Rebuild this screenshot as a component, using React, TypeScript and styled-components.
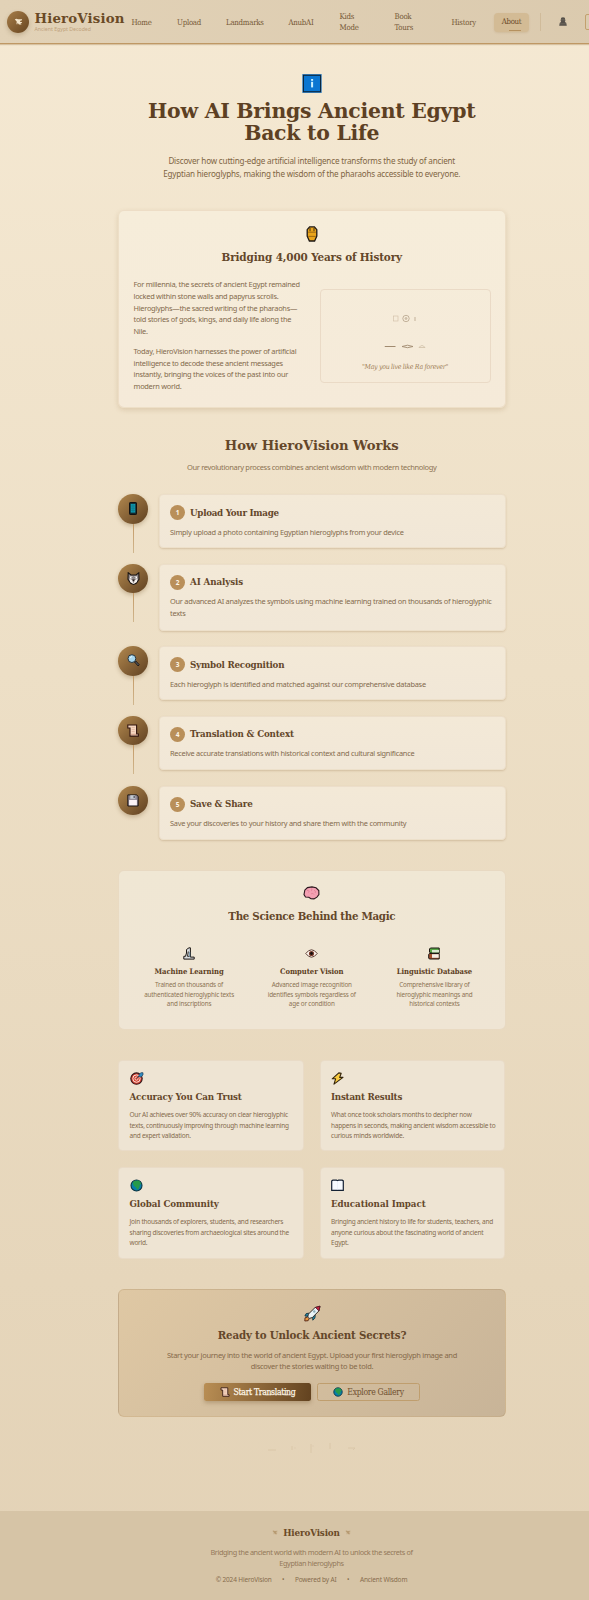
import React from "react";
import styled, { createGlobalStyle } from "styled-components";

const serif = `"DejaVu Serif Condensed", "DejaVu Serif", serif`;
const serifWide = `"DejaVu Serif", serif`;
const sans = `"Noto Sans", "Open Sans", sans-serif`;

const Global = createGlobalStyle`
  * { box-sizing: border-box; }
  html, body { margin: 0; padding: 0; overflow: hidden; }
  body { font-family: ${sans}; color: #8b7355; }
  h1, h2, h3, h4, p { margin: 0; white-space: nowrap; }
  svg { display: block; flex: none; }
`;

const Page = styled.div`
  width: 589px;
  height: 1600px;
  overflow: hidden;
  display: flex;
  flex-direction: column;
  background: linear-gradient(180deg, #f5e9d3 0%, #eddfc6 42%, #e6d6bb 80%, #e3d2b6 100%);
`;

/* ---------- header ---------- */
const Header = styled.header`
  position: relative;
  flex: none;
  height: 44px;
  width: 700px;
  display: flex;
  align-items: center;
  padding: 0 0 0 7px;
  border-bottom: 1px solid #bf9864;
  background: linear-gradient(100deg, #e2d2b7, #dac9ad);
  box-shadow: 0 1px 1px rgba(160, 120, 70, 0.35);
`;
const LogoMark = styled.div`
  width: 22px;
  height: 22px;
  flex: none;
  border-radius: 50%;
  display: grid;
  place-items: center;
  background: linear-gradient(135deg, #a87e49, #66441f);
  box-shadow: 0 2px 4px rgba(100, 70, 30, 0.25);
`;
const Brand = styled.div`
  width: 102.5px;
  flex: none;
  padding: 1px 0 0 5.5px;
`;
const BrandName = styled.div`
  font: bold 13.3px/15px ${serifWide};
  letter-spacing: 0.17px;
  color: #6a4a26;
  white-space: nowrap;
`;
const BrandTag = styled.div`
  font-size: 5.2px;
  line-height: 7px;
  color: #bfa17b;
  white-space: nowrap;
`;
const NavItem = styled.a<{ $w: number }>`
  width: ${(p) => p.$w}px;
  flex: none;
  padding-top: 1px;
  font: 7.8px/11px ${serif};
  letter-spacing: -0.25px;
  color: #765937;
  white-space: pre-line;
`;
const ActiveItem = styled.a`
  position: relative;
  flex: none;
  width: 35px;
  height: 19px;
  margin-right: 11px;
  margin-top: 1px;
  border-radius: 4px;
  background: #d3bb95;
  box-shadow: 0 1px 2px rgba(140, 100, 50, 0.15);
  font: 7.8px/18px ${serif};
  letter-spacing: -0.3px;
  text-align: center;
  color: #6b4b2a;
  &::after {
    content: "";
    position: absolute;
    left: 15px;
    bottom: 1px;
    width: 12px;
    height: 1px;
    background: #b5915f;
  }
`;
const Divider = styled.div`
  width: 1px;
  height: 18px;
  margin-right: 17.5px;
  background: #d0bb9a;
`;
const LoginBox = styled.div`
  width: 60px;
  height: 16px;
  margin-left: 18px;
  border: 1px solid #c3a06e;
  border-radius: 2px;
`;

/* ---------- page body ---------- */
const Main = styled.main`
  width: 387.5px;
  margin-left: 118px;
  display: flex;
  flex-direction: column;
  flex: none;
`;
const Hero = styled.section`
  height: 166px;
  padding-top: 30px;
  display: flex;
  flex-direction: column;
  align-items: center;
`;
const HeroTitle = styled.h1`
  margin-top: 7px;
  font: bold 20.4px/22px ${serifWide};
  letter-spacing: -0.24px;
  text-align: center;
  color: #5d4023;
`;
const HeroText = styled.p`
  font-size: 8.1px;
  line-height: 13px;
  letter-spacing: -0.18px;
  text-align: center;
  color: #7f6543;
  &:first-of-type { margin-top: 9.5px; }
`;
const Heading = styled.h2<{ $size?: number; $ls?: number; $top?: number }>`
  margin-top: ${(p) => p.$top ?? 0}px;
  font: bold ${(p) => p.$size ?? 11.6}px/18px ${serif};
  letter-spacing: ${(p) => p.$ls ?? -0.13}px;
  text-align: center;
  color: #64472a;
`;
const WorksHeading = styled(Heading)`
  font: bold 13.2px/18px ${serifWide};
  letter-spacing: -0.06px;
`;
const Panel = styled.section`
  display: flex;
  flex-direction: column;
  align-items: center;
  border-radius: 6px;
  border: 1px solid rgba(205, 170, 125, 0.2);
`;
const StoryPanel = styled(Panel)`
  height: 198px;
  background: linear-gradient(180deg, #f6edda, #f5ead9);
  box-shadow: 0 2px 5px rgba(140, 100, 50, 0.2);
  padding-top: 15px;
`;
const StoryColumns = styled.div`
  width: 100%;
  display: flex;
  padding: 13.5px 14px 0 14.5px;
`;
const StoryText = styled.div`
  width: 186px;
`;
const StoryLine = styled.p<{ $gap?: boolean }>`
  font-size: 7.4px;
  line-height: 11.75px;
  letter-spacing: -0.27px;
  color: #836a4c;
  margin-top: ${(p) => (p.$gap ? 8 : 0)}px;
`;
const Tablet = styled.div`
  width: 171px;
  height: 94px;
  margin-top: 9.5px;
  border: 1px solid #eadac6;
  border-radius: 4px;
  display: flex;
  flex-direction: column;
  align-items: center;
`;
const TabletGlyphs = styled.svg`
  margin-top: 24px;
  transform: translateX(0.5px);
`;
const Quote = styled.div`
  margin-top: 12px;
  font: italic 6.9px/10px ${serif};
  letter-spacing: -0.27px;
  color: #a07f58;
  white-space: nowrap;
`;

const Works = styled.section`
  height: 86px;
  padding-top: 29px;
`;
const WorksNote = styled.p`
  margin-top: 4.5px;
  font-size: 7.5px;
  line-height: 14px;
  letter-spacing: -0.33px;
  text-align: center;
  color: #8d7352;
`;
const Steps = styled.section`
  display: flex;
  flex-direction: column;
  gap: 15.5px;
`;
const StepRow = styled.div<{ $h: number }>`
  height: ${(p) => p.$h}px;
  display: flex;
  gap: 10.5px;
`;
const Rail = styled.div`
  width: 30px;
  display: flex;
  flex-direction: column;
  align-items: center;
`;
const StepBadge = styled.div`
  width: 30px;
  height: 29.5px;
  flex: none;
  border-radius: 50%;
  display: grid;
  place-items: center;
  background: linear-gradient(135deg, #b3894f, #5f4021);
  box-shadow: 0 2px 4px rgba(110, 75, 30, 0.3);
`;
const Connector = styled.div`
  width: 1px;
  height: 29px;
  flex: none;
  background: linear-gradient(#c49a66, #d0b78f);
`;
const StepCard = styled.div`
  flex: 1;
  padding: 10px 0 0 10.5px;
  border-radius: 4.5px;
  background: linear-gradient(180deg, #f3e9d7, #f1e7d7);
  border: 1px solid rgba(205, 170, 125, 0.14);
  box-shadow: 0 1px 2px rgba(140, 100, 50, 0.25);
`;
const StepHead = styled.div`
  display: flex;
  align-items: center;
  gap: 5px;
  height: 15px;
`;
const StepNumber = styled.span`
  width: 15px;
  height: 15px;
  border-radius: 50%;
  background: #b98f59;
  color: #fdf5e6;
  font: bold 6.5px/15px ${sans};
  text-align: center;
`;
const StepTitle = styled.h3<{ $ls: number }>`
  font: bold 9.7px/14px ${serif};
  letter-spacing: ${(p) => p.$ls}px;
  color: #64472a;
  transform: translateY(-0.5px);
`;
const StepText = styled.p`
  margin-top: 6.5px;
  font-size: 7.4px;
  line-height: 11.5px;
  letter-spacing: -0.265px;
  color: #846b4d;
  & + & { margin-top: 0; }
`;

const SciencePanel = styled(Panel)`
  margin-top: 30.5px;
  height: 159.5px;
  padding-top: 15px;
  background: linear-gradient(180deg, #f0e7d4, #efe5d4);
`;
const ScienceGrid = styled.div`
  width: 368px;
  margin-top: 21.5px;
  display: grid;
  grid-template-columns: repeat(3, 1fr);
`;
const ScienceItem = styled.div`
  display: flex;
  flex-direction: column;
  align-items: center;
`;
const ScienceTitle = styled.h4`
  margin-top: 6px;
  font: bold 7.6px/12px ${serif};
  letter-spacing: -0.05px;
  color: #5d4023;
`;
const ScienceText = styled.p`
  margin-top: 2.5px;
  font-size: 6.3px;
  line-height: 9.3px;
  letter-spacing: -0.17px;
  text-align: center;
  white-space: pre-line;
  color: #8c7353;
`;

const BenefitGrid = styled.section`
  margin-top: 30px;
  display: grid;
  grid-template-columns: 185.5px 185.5px;
  gap: 15.5px 16px;
`;
const Benefit = styled.div`
  height: 91.7px;
  padding: 11px 0 0 10.5px;
  border-radius: 4.5px;
  border: 1px solid rgba(205, 170, 125, 0.14);
  background: #eee4d3;
`;
const BenefitTitle = styled.h3<{ $ls: number }>`
  margin-top: 4px;
  font: bold 9.7px/16px ${serif};
  letter-spacing: ${(p) => p.$ls}px;
  color: #64472a;
`;
const BenefitText = styled.p`
  margin-top: 5.5px;
  font-size: 6.5px;
  line-height: 10.4px;
  letter-spacing: -0.23px;
  white-space: pre-line;
  color: #846b4d;
`;

const CallPanel = styled(Panel)`
  margin-top: 30px;
  width: 388px;
  height: 128px;
  padding-top: 15px;
  border: 1px solid rgba(170, 130, 80, 0.22);
  background: linear-gradient(135deg, #dfc8a4, #c8b498);
`;
const CallText = styled.p`
  font-size: 7.5px;
  line-height: 11px;
  letter-spacing: -0.29px;
  text-align: center;
  white-space: pre-line;
  color: #85694a;
  margin-top: 6px;
`;
const Actions = styled.div`
  display: flex;
  gap: 6px;
  margin-top: 11px;
`;
const Button = styled.button<{ $primary?: boolean }>`
  width: ${(p) => (p.$primary ? 107 : 103)}px;
  height: 18px;
  padding: 0;
  display: flex;
  align-items: center;
  justify-content: center;
  gap: 4px;
  border-radius: 2.5px;
  border: 1px solid ${(p) => (p.$primary ? "transparent" : "#bf9e6e")};
  background: ${(p) => (p.$primary ? "linear-gradient(100deg, #b98e54, #62421f) border-box" : "transparent")};
  box-shadow: ${(p) => (p.$primary ? "0 2px 4px rgba(100, 70, 30, 0.3)" : "none")};
  font: 400 8.6px/16px ${serif};
  -webkit-text-stroke: ${(p) => (p.$primary ? "0.25px #fdf5e6" : "0")};
  letter-spacing: -0.32px;
  white-space: nowrap;
  color: ${(p) => (p.$primary ? "#fdf5e6" : "#6f5030")};
`;
const Ornaments = styled.div`
  height: 94px;
  padding-top: 24px;
  display: flex;
  justify-content: center;
  opacity: 0.2;
`;

/* ---------- footer ---------- */
const Footer = styled.footer`
  flex: 1;
  padding: 14px 34px 0 0;
  width: 657px;
  display: flex;
  flex-direction: column;
  align-items: center;
  background: #d6c4a6;
`;
const FooterBrand = styled.div`
  display: flex;
  align-items: center;
  gap: 5px;
  font: bold 8.8px/16px ${serifWide};
  letter-spacing: -0.15px;
  color: #6a4a26;
`;
const FooterText = styled.p`
  margin-top: 6px;
  font-size: 7.3px;
  line-height: 11px;
  letter-spacing: -0.39px;
  text-align: center;
  white-space: pre-line;
  color: #94795a;
`;
const FooterMeta = styled.div`
  display: flex;
  gap: 10.5px;
  margin-top: 5.5px;
  font-size: 6.5px;
  line-height: 12px;
  letter-spacing: -0.15px;
  color: #866c4d;
`;

/* ---------- icons ---------- */
type IconProps = { w: number; h: number; box: string; children: React.ReactNode };
const Icon = ({ w, h, box, children }: IconProps) => (
  <svg width={w} height={h} viewBox={box} fill="none">{children}</svg>
);
const ink = "#1d1714";

const InfoIcon = () => (
  <Icon w={20} h={19} box="0 0 20 19">
    <rect x="1" y="0.8" width="18" height="17.4" fill="#0a76d2" stroke="#2b77b8" strokeWidth="1.4" />
    <rect x="1.5" y="1.3" width="17" height="16.4" stroke="#092033" strokeWidth="0.9" />
    <rect x="9.1" y="5" width="2" height="1.8" fill="#c9f1ff" />
    <rect x="9.1" y="7.8" width="2" height="5.6" fill="#c9f1ff" />
  </Icon>
);
const UrnIcon = () => (
  <Icon w={12} h={16} box="0 0 12 16">
    <path d="M3.6 .9h4.8L10.8 3.7v6.5L8.6 15H3.4L1.2 10.2V3.7z" fill="#eaa51b" stroke={ink} strokeWidth="1.3" />
    <path d="M4 2v3.200M8 2v3.200" stroke={ink} strokeWidth="0.8" />
    <path d="M2.2 6.200h7.600M2.200 10.400h7.600" stroke="#8a5a10" strokeWidth="0.8" />
  </Icon>
);
const PhoneIcon = () => (
  <Icon w={8} h={13} box="0 0 8 13">
    <rect x="0.5" y="0.5" width="7" height="12" rx="0.7" fill="#16282c" stroke="#111" />
    <rect x="1.7" y="1.9" width="4.6" height="8.7" fill="#0d98ad" />
    <path d="M4 2v8.5M1.7 4h4.6M1.7 6.2h4.6M1.7 8.4h4.6" stroke="#136879" strokeWidth="0.5" />
  </Icon>
);
const WolfIcon = () => (
  <Icon w={13} h={13} box="0 0 13 13">
    <path d="M1.2.8 4 3h5l2.8-2.2.2 6.5-2.7 4L6.5 12.4 3.7 11.3 1 7.3z" fill="#8f8789" stroke={ink} strokeWidth="1.1" />
    <path d="M2.2 6.5 5 8l1.5 3.5L8 8l2.8-1.5-1 3.5-3.3 2L3.2 10z" fill="#f5f1ee" />
    <path d="M3 4.6h2.6v2H3zM7.4 4.6H10v2H7.4z" fill="#fff" />
    <path d="M4.6 5.2h1v1h-1zM7.4 5.2h1v1h-1z" fill={ink} />
    <path d="M5.2 7.5h2.6L6.5 9.6z" fill={ink} />
  </Icon>
);
const LensIcon = () => (
  <Icon w={13} h={13} box="0 0 13 13">
    <path d="m7.6 8 3.6 4 1-1.3L8.8 7z" fill="#58606a" stroke={ink} strokeWidth="1" />
    <circle cx="4.9" cy="4.6" r="3.9" fill="#a8d7ee" stroke="#26343e" />
    <path d="M3.2 3.8 5 2.4" stroke="#effbff" />
  </Icon>
);
const ScrollIcon = ({ w = 12, h = 13 }: { w?: number; h?: number }) => (
  <Icon w={w} h={h} box="0 0 12 13">
    <path d="M.8 1h8.8v9h1.8v2.1H3V4H.8z" fill="#f4d5bf" stroke="#32150f" strokeWidth="1.1" />
    <path d="M4.7 3.5h3M4.7 5.5h3M4.7 7.5h3" stroke="#d9a892" strokeWidth="0.6" />
    <path d="M3.5 10.3h6" stroke="#a8624f" strokeWidth="0.5" />
  </Icon>
);
const DiskIcon = () => (
  <Icon w={12} h={13} box="0 0 12 13">
    <path d="M.8.9h8.7l1.7 1.5V12H.8z" fill="#8d8592" stroke={ink} strokeWidth="1" />
    <path d="M3.3 1.2h5v3.6h-5z" fill="#c4cbd2" />
    <path d="M6.6 1.7h1.1v2.2H6.6z" fill="#414149" />
    <path d="M2.1 5.9h7.8v5.4H2.1z" fill="#fbf3f6" />
  </Icon>
);
const BrainIcon = () => (
  <Icon w={17} h={14} box="0 0 17 14">
    <path d="M1.800 4.200 4.500 1.600 9 .9l4 .9 2.800 2.800.1 4-2 2.500-2.900 1.800-3-.2-2.200-1.500-3.300-.2L1 8.600z" fill="#f3a0b2" stroke="#2b171d" strokeWidth="1.1" />
    <path d="M4 4.500c2-.5 2.500 1 1.500 2M8 2.500c1.500.5 1 2 0 2.500M11 4.500c1.500 0 2 1.500 1 2.500M8 8c1-1 2.500-.5 3 .5" stroke="#dc7790" strokeWidth="0.7" />
  </Icon>
);
const ArmIcon = () => (
  <Icon w={12} h={13} box="0 0 12 13">
    <path d="M3.5 2.500 6 .8h1.400v9.300h3.800v2H.8V9.300h1.700l1-3.300z" fill="#d8dbdc" stroke={ink} strokeWidth="1" />
    <path d="M5.300 4.500 4.500 9.300h2" stroke={ink} strokeWidth="0.9" />
    <path d="M6.800 5v5" stroke="#4b7ca1" strokeWidth="0.7" />
  </Icon>
);
const EyeIcon = () => (
  <Icon w={13} h={13} box="0 0 13 13">
    <path d="M.8 6.500Q3.500 2.800 6.500 2.800T12.200 6.500Q9.500 10.200 6.500 10.200T.8 6.500Z" fill="#fff6ee" stroke="#4a2a21" strokeWidth="0.9" />
    <circle cx="6.5" cy="6.5" r="2.6" fill="#7c3c2c" />
    <circle cx="6.5" cy="6.5" r="1.4" fill="#150f0e" />
  </Icon>
);
const BooksIcon = () => (
  <Icon w={12} h={13} box="0 0 12 13">
    <path d="M2.400 1h8.800v5H2.400L1.500 5V2z" fill="#58a847" stroke={ink} strokeWidth="1" />
    <path d="M4 3h7v2.400H4z" fill="#d9e8d0" />
    <path d="M1.400 6.500h9.800V12H1.400L.7 11V7.500z" fill="#a5502f" stroke={ink} strokeWidth="1" />
    <path d="M4 7.200h6.700v3.600H4z" fill="#f4eee6" />
  </Icon>
);
const TargetIcon = () => (
  <Icon w={14} h={13} box="0 0 14 13">
    <circle cx="6.5" cy="6.6" r="5.7" fill="#d6402f" stroke="#30161a" strokeWidth="1.1" />
    <circle cx="6.5" cy="6.6" r="3.7" stroke="#f9e3dc" strokeWidth="1" />
    <circle cx="6.5" cy="6.6" r="1.6" stroke="#f9e3dc" strokeWidth="0.9" />
    <path d="m6.800 6.300 3.400-3.400" stroke="#273442" strokeWidth="0.9" />
    <path d="M9 2.500 11 .7h2V3l-2 2-2.200-.3z" fill="#318bc0" stroke="#24415a" strokeWidth="0.7" />
  </Icon>
);
const BoltIcon = () => (
  <Icon w={13} h={13} box="0 0 13 13">
    <path d="M7.800.9 1.200 6.800h3.400L3 12.100l9-6.700H8.700l1.500-4.100z" fill="#f9cb3f" stroke="#33230b" strokeWidth="1.1" strokeLinejoin="round" />
  </Icon>
);
const GlobeIcon = ({ s = 13 }: { s?: number }) => (
  <Icon w={s} h={s} box="0 0 13 13">
    <circle cx="6.5" cy="6.5" r="5.5" fill="#087eaa" stroke="#0c3441" strokeWidth="1.1" />
    <path d="m4 2 5-.5 2.300 3-1.500 1.500-.5 2.500L7.500 11 6 8.500 3.800 6.800 2.600 4z" fill="#269a4a" />
  </Icon>
);
const BookIcon = () => (
  <Icon w={13} h={13} box="0 0 13 13">
    <path d="M.7 1.900 1.800 1.200h3.700l1 .5 1-.5h3.700l1.100.7v9.500H.7z" fill="#f7faff" stroke="#142134" strokeWidth="1.2" />
    <path d="M6.500 2.200v8.500" stroke="#e3e9f2" strokeWidth="0.5" />
  </Icon>
);
const RocketIcon = () => (
  <Icon w={17} h={17} box="0 0 17 17">
    <path d="M5 8.200 2.200 8.600.9 11l3 .3M8.700 12l.1 3.200 2-2 .5-3" fill="#218da9" stroke="#173240" strokeWidth="0.9" />
    <path d="m3.500 12.200-2.500.6L.8 16l3.300-.3 1-2" fill="#eb963d" stroke="#50261b" strokeWidth="0.9" />
    <path d="M16 1.200 11 2.600 4.300 9.200l-.5 3 1.300 1.200 3.200-.8 6.700-6.800z" fill="#eaf4f7" stroke={ink} strokeWidth="0.9" />
    <path d="m16 1.200-4.500 1.200 3.300 3.500z" fill="#ca2842" stroke="#571325" strokeWidth="0.8" />
    <circle cx="10.3" cy="6.5" r="1.2" fill="#8caeba" />
  </Icon>
);
const Bird = ({ color, w = 8 }: { color: string; w?: number }) => (
  <Icon w={w} h={w * 0.8} box="0 0 10 8">
    <path d="M.8 1.800 2.500.8 4.500 1.500 9 1.300 8.800 2.600 6.500 3.200 6.800 4.200 9 4.600 8.800 5.600 7 6 8.500 7.200H5.500L4 5.200 3.700 7H2.800L3 4 2 2.800z" fill={color} />
  </Icon>
);
const UserIcon = () => (
  <Icon w={8} h={9} box="0 0 8 9">
    <path d="M2.200.8 4 .2 5.800.8l.6 2.700-.5 1.500 1.300.8.6 2.900H.2L.8 5.800 2.100 5 1.600 3.500z" fill="#55504a" />
    <path d="M2 2.800h4M1 6.800h6" stroke="#81796c" strokeWidth="0.5" />
  </Icon>
);
const GlyphRows = () => (
  <TabletGlyphs width={42} height={36} viewBox="0 0 42 36" fill="none" stroke="#a18b70" strokeWidth="0.6">
    <rect x="9" y="2" width="4.5" height="5" stroke="#cfbda5" />
    <circle cx="21.5" cy="4.5" r="3.2" />
    <circle cx="21.5" cy="4.5" r="0.9" />
    <path d="M30.5 3v4" />
    <path d="M0 32.500h11" strokeWidth="1.1" />
    <path d="M17.500 32.500q5.500-2.600 11 0-5.500 2.400-11 0z" strokeWidth="0.9" />
    <path d="M34.500 33.500q3-4 6 0z" stroke="#c5b197" />
  </TabletGlyphs>
);
const OrnamentRow = () => (
  <svg width={92} height={14} viewBox="0 0 92 14" fill="none" stroke="#a88a60" strokeWidth="0.8">
    <path d="M2 9h8M26 5v4M45 3v9M64 2v6M82 7h7l-2 2" />
    <path d="M28 7h2M46 5h2" opacity="0.5" />
  </svg>
);

/* ---------- content ---------- */
const nav = [
  { label: "Home", w: 45.5 },
  { label: "Upload", w: 49 },
  { label: "Landmarks", w: 62.5 },
  { label: "AnubAI", w: 51 },
  { label: "Kids\nMode", w: 55 },
  { label: "Book\nTours", w: 57 },
  { label: "History", w: 42.5 },
];

const steps = [
  { icon: <PhoneIcon />, title: "Upload Your Image", ls: -0.27, lines: ["Simply upload a photo containing Egyptian hieroglyphs from your device"] },
  { icon: <WolfIcon />, title: "AI Analysis", ls: -0.1, lines: ["Our advanced AI analyzes the symbols using machine learning trained on thousands of hieroglyphic", "texts"] },
  { icon: <LensIcon />, title: "Symbol Recognition", ls: -0.2, lines: ["Each hieroglyph is identified and matched against our comprehensive database"] },
  { icon: <ScrollIcon />, title: "Translation & Context", ls: -0.18, lines: ["Receive accurate translations with historical context and cultural significance"] },
  { icon: <DiskIcon />, title: "Save & Share", ls: -0.2, lines: ["Save your discoveries to your history and share them with the community"] },
];

const science = [
  { icon: <ArmIcon />, title: "Machine Learning", text: "Trained on thousands of\nauthenticated hieroglyphic texts\nand inscriptions" },
  { icon: <EyeIcon />, title: "Computer Vision", text: "Advanced image recognition\nidentifies symbols regardless of\nage or condition" },
  { icon: <BooksIcon />, title: "Linguistic Database", text: "Comprehensive library of\nhieroglyphic meanings and\nhistorical contexts" },
];

const benefits = [
  { icon: <TargetIcon />, title: "Accuracy You Can Trust", ls: -0.15, text: "Our AI achieves over 90% accuracy on clear hieroglyphic\ntexts, continuously improving through machine learning\nand expert validation." },
  { icon: <BoltIcon />, title: "Instant Results", ls: -0.24, text: "What once took scholars months to decipher now\nhappens in seconds, making ancient wisdom accessible to\ncurious minds worldwide." },
  { icon: <GlobeIcon />, title: "Global Community", ls: -0.1, text: "Join thousands of explorers, students, and researchers\nsharing discoveries from archaeological sites around the\nworld." },
  { icon: <BookIcon />, title: "Educational Impact", ls: -0.07, text: "Bringing ancient history to life for students, teachers, and\nanyone curious about the fascinating world of ancient\nEgypt." },
];

export default function App() {
  return (
    <Page>
      <Global />
      <Header>
        <LogoMark><Bird color="#f5e6cc" w={9} /></LogoMark>
        <Brand>
          <BrandName>HieroVision</BrandName>
          <BrandTag>Ancient Egypt Decoded</BrandTag>
        </Brand>
        {nav.map((n) => <NavItem key={n.label} $w={n.w}>{n.label}</NavItem>)}
        <ActiveItem>About</ActiveItem>
        <Divider />
        <UserIcon />
        <LoginBox />
      </Header>

      <Main>
        <Hero>
          <InfoIcon />
          <HeroTitle>How AI Brings Ancient Egypt<br />Back to Life</HeroTitle>
          <HeroText>Discover how cutting-edge artificial intelligence transforms the study of ancient</HeroText>
          <HeroText>Egyptian hieroglyphs, making the wisdom of the pharaohs accessible to everyone.</HeroText>
        </Hero>

        <StoryPanel>
          <UrnIcon />
          <Heading $top={5.5}>Bridging 4,000 Years of History</Heading>
          <StoryColumns>
            <StoryText>
              <StoryLine>For millennia, the secrets of ancient Egypt remained</StoryLine>
              <StoryLine>locked within stone walls and papyrus scrolls.</StoryLine>
              <StoryLine>Hieroglyphs—the sacred writing of the pharaohs—</StoryLine>
              <StoryLine>told stories of gods, kings, and daily life along the</StoryLine>
              <StoryLine>Nile.</StoryLine>
              <StoryLine $gap>Today, HieroVision harnesses the power of artificial</StoryLine>
              <StoryLine>intelligence to decode these ancient messages</StoryLine>
              <StoryLine>instantly, bringing the voices of the past into our</StoryLine>
              <StoryLine>modern world.</StoryLine>
            </StoryText>
            <Tablet>
              <GlyphRows />
              <Quote>"May you live like Ra forever"</Quote>
            </Tablet>
          </StoryColumns>
        </StoryPanel>

        <Works>
          <WorksHeading>How HieroVision Works</WorksHeading>
          <WorksNote>Our revolutionary process combines ancient wisdom with modern technology</WorksNote>
        </Works>

        <Steps>
          {steps.map((s, i) => (
            <StepRow key={s.title} $h={s.lines.length > 1 ? 67 : 54.2}>
              <Rail>
                <StepBadge>{s.icon}</StepBadge>
                {i < steps.length - 1 && <Connector />}
              </Rail>
              <StepCard>
                <StepHead>
                  <StepNumber>{i + 1}</StepNumber>
                  <StepTitle $ls={s.ls}>{s.title}</StepTitle>
                </StepHead>
                {s.lines.map((l) => <StepText key={l}>{l}</StepText>)}
              </StepCard>
            </StepRow>
          ))}
        </Steps>

        <SciencePanel>
          <BrainIcon />
          <Heading $top={7} $size={11.4} $ls={-0.3}>The Science Behind the Magic</Heading>
          <ScienceGrid>
            {science.map((s) => (
              <ScienceItem key={s.title}>
                {s.icon}
                <ScienceTitle>{s.title}</ScienceTitle>
                <ScienceText>{s.text}</ScienceText>
              </ScienceItem>
            ))}
          </ScienceGrid>
        </SciencePanel>

        <BenefitGrid>
          {benefits.map((b) => (
            <Benefit key={b.title}>
              {b.icon}
              <BenefitTitle $ls={b.ls}>{b.title}</BenefitTitle>
              <BenefitText>{b.text}</BenefitText>
            </Benefit>
          ))}
        </BenefitGrid>

        <CallPanel>
          <RocketIcon />
          <Heading $top={4.5} $size={11.4} $ls={-0.17}>Ready to Unlock Ancient Secrets?</Heading>
          <CallText>{"Start your journey into the world of ancient Egypt. Upload your first hieroglyph image and\ndiscover the stories waiting to be told."}</CallText>
          <Actions>
            <Button $primary><ScrollIcon w={10} h={10} />Start Translating</Button>
            <Button><GlobeIcon s={10} />Explore Gallery</Button>
          </Actions>
        </CallPanel>
        <Ornaments><OrnamentRow /></Ornaments>
      </Main>

      <Footer>
        <FooterBrand><Bird color="#b79b72" w={6} />HieroVision<Bird color="#b79b72" w={6} /></FooterBrand>
        <FooterText>{"Bridging the ancient world with modern AI to unlock the secrets of\nEgyptian hieroglyphs"}</FooterText>
        <FooterMeta><span>© 2024 HieroVision</span><span>•</span><span>Powered by AI</span><span>•</span><span>Ancient Wisdom</span></FooterMeta>
      </Footer>
    </Page>
  );
}
